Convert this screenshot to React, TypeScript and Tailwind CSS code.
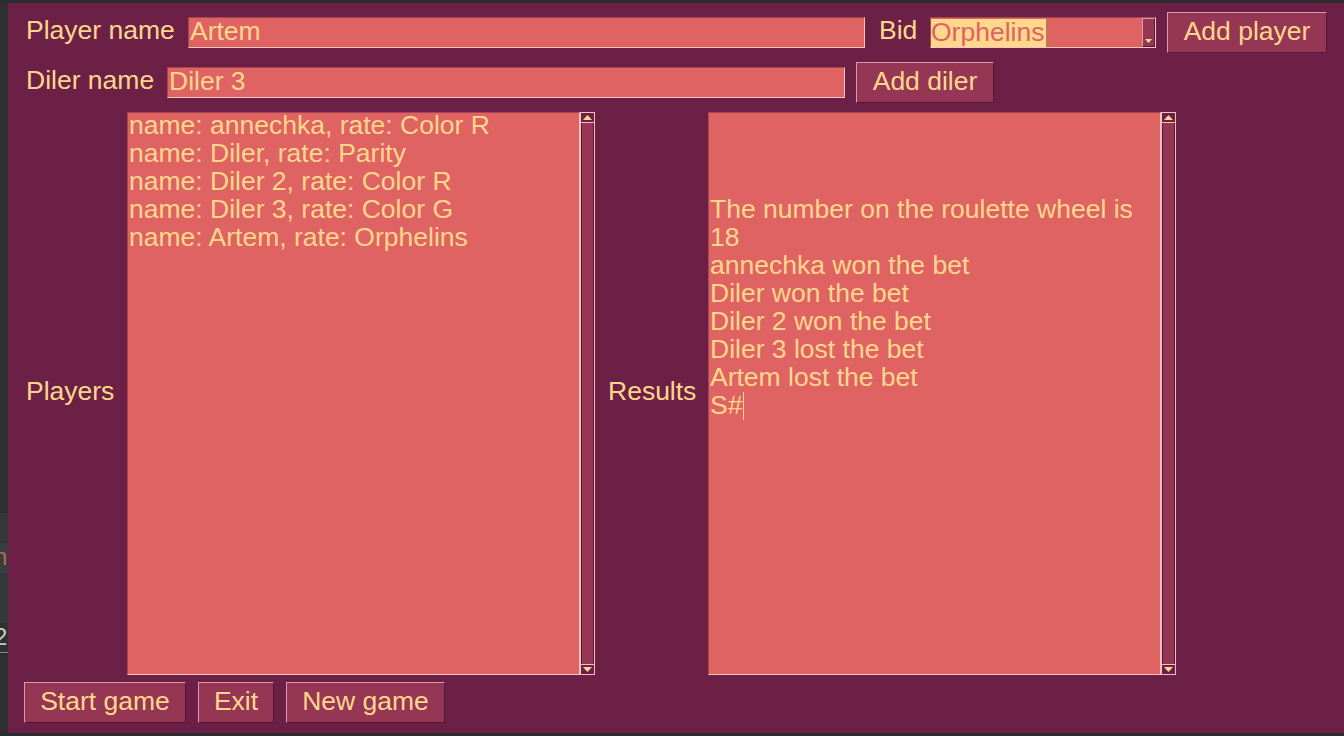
import React from "react";

const players = [
  "name: annechka, rate: Color R",
  "name: Diler, rate: Parity",
  "name: Diler 2, rate: Color R",
  "name: Diler 3, rate: Color G",
  "name: Artem, rate: Orphelins",
];

const results = [
  "",
  "",
  "",
  "The number on the roulette wheel is",
  "18",
  "annechka won the bet",
  "Diler won the bet",
  "Diler 2 won the bet",
  "Diler 3 lost the bet",
  "Artem lost the bet",
];

function TkButton({ label, width }: { label: string; width: string }) {
  return (
    <button
      className={`${width} h-[41px] shrink-0 bg-[#963655] border border-t-[#d89cad] border-l-[#d89cad] border-b-[#56173a] border-r-[#56173a] text-[#ffd78c] text-[26.5px] leading-[28px] flex items-center justify-center pb-[3px]`}
    >
      {label}
    </button>
  );
}

function TkEntry({ value, width }: { value: string; width: string }) {
  return (
    <div
      className={`${width} h-[31px] shrink-0 bg-[#e06363] border border-t-[#a9474f] border-l-[#a9474f] border-b-[#f7c7bd] border-r-[#f7c7bd] text-[#ffd78c] text-[26.5px] leading-[27px] pl-[1px] whitespace-nowrap overflow-hidden`}
    >
      {value}
    </div>
  );
}

function Arrow({ up }: { up: boolean }) {
  return (
    <svg width="9" height="5" viewBox="0 0 9 5">
      {up ? (
        <polygon points="4.5,0 9,5 0,5" fill="#ffd78c" />
      ) : (
        <polygon points="0,0 9,0 4.5,5" fill="#ffd78c" />
      )}
    </svg>
  );
}

function Scrollbar() {
  return (
    <div className="w-[15px] h-full shrink-0 flex flex-col border border-[#f4bfb6] bg-[#963655]">
      <div className="h-[10px] shrink-0 flex items-center justify-center border-b border-b-[#f0c1c4] bg-[#6d2046]">
        <Arrow up />
      </div>
      <div className="flex-1 border-x border-x-[#56173a]" />
      <div className="h-[10px] shrink-0 flex items-center justify-center border-t border-t-[#f0c1c4] bg-[#6d2046]">
        <Arrow up={false} />
      </div>
    </div>
  );
}

function Combo() {
  return (
    <div className="w-[226px] h-[31px] shrink-0 flex bg-[#e06363] border border-t-[#a9474f] border-l-[#a9474f] border-b-[#f7c7bd] border-r-[#f7c7bd]">
      <div className="flex-1 min-w-0 text-[26.5px] leading-[29px] overflow-hidden">
        <span className="inline-block h-[29px] leading-[27px] pr-[2px] bg-[#ffd88c] text-[#e06363] border-r border-r-[#9e8a5c]">
          Orphelins
        </span>
      </div>
      <div className="w-[13px] shrink-0 bg-[#963655] border border-t-[#d89cad] border-l-[#d89cad] border-b-[#56173a] border-r-[#56173a] flex items-end justify-center pb-[3px]">
        <svg width="7" height="4" viewBox="0 0 7 4">
          <polygon points="0,0 7,0 3.5,4" fill="#ffd78c" />
        </svg>
      </div>
    </div>
  );
}

export default function App() {
  return (
    <div className="w-[1344px] h-[736px] bg-[#2a2c2d] flex flex-col pt-[3px] overflow-hidden font-['Liberation_Sans',Arial,sans-serif]">
      <div className="flex h-[730px]">
        {/* background window sliver on the left */}
        <div className="w-[8px] shrink-0 flex flex-col overflow-hidden text-[24px] leading-[28px]">
          <div className="h-[510px] bg-[#2d2f30]" />
          <div className="h-[30px] bg-[#34383a]" />
          <div className="h-[30px] bg-[#3a3d3f] text-[#b36a4a] -indent-[6px] whitespace-nowrap">n</div>
          <div className="h-[50px] bg-[#33383a]" />
          <div className="h-[30px] bg-[#2f3233] text-[#c8c8c8] -indent-[6px] whitespace-nowrap border-b border-b-[#888]">2</div>
          <div className="flex-1 bg-[#2d2f30]" />
        </div>

        <div className="flex-1 bg-[#6d2046] flex flex-col pt-[9px] pl-[16px] text-[#ffd78c] text-[26.5px] leading-[28px]">
          {/* Row 1 */}
          <div className="flex items-center h-[41px]">
            <div className="w-[164px] pl-[2px] shrink-0 pb-[5px]">Player name</div>
            <TkEntry value="Artem" width="w-[677px]" />
            <div className="w-[65px] pl-[14px] shrink-0 pb-[5px]">Bid</div>
            <Combo />
            <div className="w-[11px] shrink-0" />
            <TkButton label="Add player" width="w-[160px]" />
          </div>

          {/* Row 2 */}
          <div className="flex items-center h-[41px] mt-[9px]">
            <div className="w-[143px] pl-[2px] shrink-0 pb-[5px]">Diler name</div>
            <TkEntry value="Diler 3" width="w-[678px]" />
            <div className="w-[11px] shrink-0" />
            <TkButton label="Add diler" width="w-[138px]" />
          </div>

          {/* Lists */}
          <div className="flex items-center h-[563px] mt-[9px]">
            <div className="w-[103px] pl-[2px] shrink-0 pb-[6px]">Players</div>
            <div className="w-[453px] h-full shrink-0 bg-[#e06363] border border-t-[#a9474f] border-l-[#a9474f] border-b-[#f7c7bd] border-r-[#f7c7bd] pl-[1px]">
              {players.map((p) => (
                <div key={p} className="whitespace-nowrap h-[28px] leading-[24px]">{p}</div>
              ))}
            </div>
            <Scrollbar />
            <div className="w-[113px] pl-[13px] shrink-0 pb-[6px]">Results</div>
            <div className="w-[453px] h-full shrink-0 bg-[#e06363] border border-t-[#a9474f] border-l-[#a9474f] border-b-[#f7c7bd] border-r-[#f7c7bd] pl-[1px]">
              {results.map((r, i) => (
                <div key={i} className="whitespace-nowrap h-[28px] leading-[24px]">{r}</div>
              ))}
              <div className="whitespace-nowrap h-[28px] leading-[24px] flex items-start">
                S#<span className="inline-block w-[1px] h-[28px] bg-[#ffd78c] ml-[1px] mt-[-1px]" />
              </div>
            </div>
            <Scrollbar />
          </div>

          {/* Bottom buttons */}
          <div className="flex gap-[12px] mt-[7px]">
            <TkButton label="Start game" width="w-[162px]" />
            <TkButton label="Exit" width="w-[76px]" />
            <TkButton label="New game" width="w-[159px]" />
          </div>
        </div>
      </div>
    </div>
  );
}
